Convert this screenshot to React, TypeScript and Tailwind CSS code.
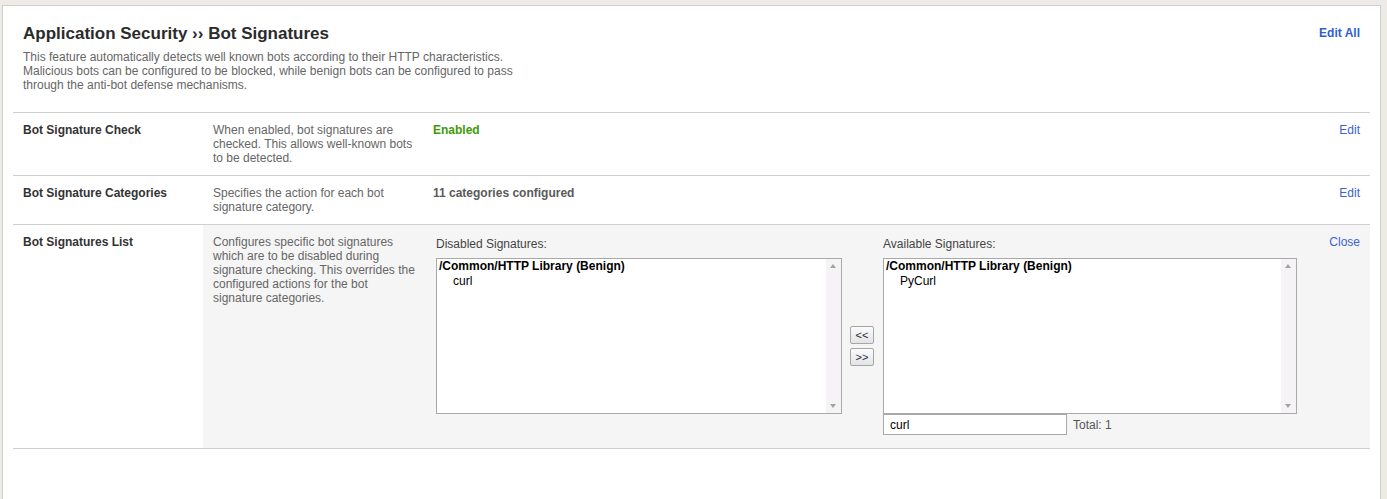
import React from 'react';

const font = { fontFamily: '"Liberation Sans", Arial, Helvetica, sans-serif' };

function ListBox({ group, items, w }: { group: string; items: string[]; w: string }) {
  return (
    <div className={`relative h-[156px] ${w} border border-[#a9a9a9] bg-white`}>
      <div className="pl-[2px] text-[12px] leading-[15px] text-black">
        <div className="font-bold">{group}</div>
        {items.map((it) => (
          <div key={it} className="pl-[14px]">
            {it}
          </div>
        ))}
      </div>
      <div className="absolute right-0 top-0 bottom-0 w-[15px] bg-[#f6f3f6]">
        <div className="absolute left-[4px] top-[5px] h-0 w-0 border-x-[3.5px] border-b-[4px] border-x-transparent border-b-[#a3a3a3]" />
        <div className="absolute left-[4px] bottom-[5px] h-0 w-0 border-x-[3.5px] border-t-[4px] border-x-transparent border-t-[#a3a3a3]" />
      </div>
    </div>
  );
}

function MoveButton({ label }: { label: string }) {
  return (
    <button className="h-[18px] w-[24px] rounded-[2px] border border-[#a6a6a6] bg-gradient-to-b from-[#fbfbfb] to-[#e4e4e4] text-[11px] leading-[14px] text-[#1d2a4a]">
      {label}
    </button>
  );
}

export default function App() {
  const rows = [
    {
      label: 'Bot Signature Check',
      desc: 'When enabled, bot signatures are checked. This allows well-known bots to be detected.',
      value: <span className="font-bold text-[#3f9a08]">Enabled</span>,
      action: 'Edit',
    },
    {
      label: 'Bot Signature Categories',
      desc: 'Specifies the action for each bot signature category.',
      value: <span className="font-bold text-[#5a5a5a]">11 categories configured</span>,
      action: 'Edit',
    },
  ];

  return (
    <div className="min-h-[499px] bg-[#eeebe7] pt-[5px] pl-[2px] pr-[6px]" style={font}>
      <div className="min-h-[494px] border-l border-t border-r border-[#cfcfcf] bg-white px-[10px] text-[12px] leading-[14px] text-[#333]">
        {/* header */}
        <div className="flex items-start justify-between px-[10px] pt-[18px] pb-[20px]">
          <div>
            <h1 className="text-[17px] leading-[20px] font-bold text-[#2b2b2b]">
              Application Security ›› Bot Signatures
            </h1>
            <p className="mt-[6px] text-[12px] leading-[14px] text-[#666]">
              This feature automatically detects well known bots according to their HTTP characteristics.
              <br />
              Malicious bots can be configured to be blocked, while benign bots can be configured to pass
              <br />
              through the anti-bot defense mechanisms.
            </p>
          </div>
          <a className="mt-[2px] font-bold text-[#2f5fd0]">Edit All</a>
        </div>

        {/* rows */}
        <div className="border-t border-[#cfcfcf]">
          {rows.map((r) => (
            <div key={r.label} className="flex border-b border-[#cfcfcf]">
              <div className="w-[190px] shrink-0 px-[10px] py-[10px] font-bold text-[#333]">{r.label}</div>
              <div className="w-[220px] shrink-0 py-[10px] pl-[10px] pr-[5px] text-[#666]">{r.desc}</div>
              <div className="flex-1 px-[10px] py-[10px]">{r.value}</div>
              <div className="px-[10px] py-[10px] text-[#3a62d6]">{r.action}</div>
            </div>
          ))}

          <div className="flex border-b border-[#cfcfcf]">
            <div className="w-[190px] shrink-0 px-[10px] py-[10px] font-bold text-[#333]">Bot Signatures List</div>
            <div className="flex flex-1 bg-[#f5f5f5]">
              <div className="w-[220px] shrink-0 py-[10px] pl-[10px] pr-[5px] text-[#666]">
                Configures specific bot signatures which are to be disabled during signature checking. This overrides
                the configured actions for the bot signature categories.
              </div>
              <div className="flex flex-1 items-start pl-[13px] pt-[12px] pb-[13px]">
                <div>
                  <div className="mb-[7px] text-[#444]">Disabled Signatures:</div>
                  <ListBox group="/Common/HTTP Library (Benign)" items={['curl']} w="w-[406px]" />
                </div>
                <div className="mx-[8px] mt-[89px] flex flex-col gap-[4px] pr-[1px]">
                  <MoveButton label="<<" />
                  <MoveButton label=">>" />
                </div>
                <div>
                  <div className="mb-[7px] text-[#444]">Available Signatures:</div>
                  <ListBox group="/Common/HTTP Library (Benign)" items={['PyCurl']} w="w-[414px]" />
                  <div className="flex items-center">
                    <input
                      readOnly
                      value="curl"
                      className="h-[21px] w-[184px] border border-[#a9a9a9] bg-white px-[6px] text-[12px] text-black outline-none"
                      style={font}
                    />
                    <span className="ml-[6px] text-[#555]">Total: 1</span>
                  </div>
                </div>
              </div>
              <div className="px-[10px] py-[10px] text-[#3a62d6]">Close</div>
            </div>
          </div>
        </div>
      </div>
    </div>
  );
}
